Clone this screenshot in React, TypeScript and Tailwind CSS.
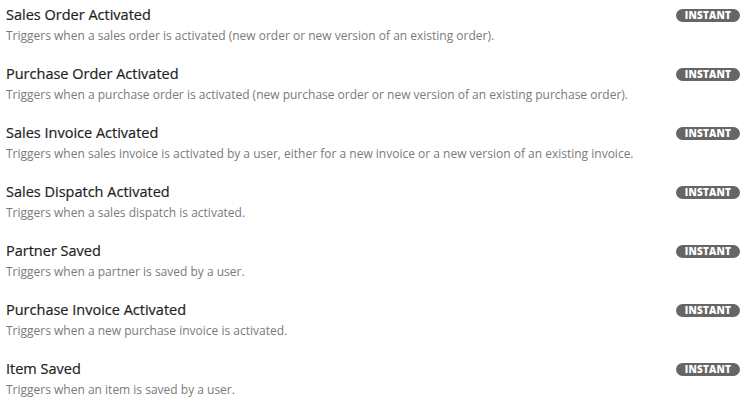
import React from "react";

const items = [
  ["Sales Order Activated", "Triggers when a sales order is activated (new order or new version of an existing order)."],
  ["Purchase Order Activated", "Triggers when a purchase order is activated (new purchase order or new version of an existing purchase order)."],
  ["Sales Invoice Activated", "Triggers when sales invoice is activated by a user, either for a new invoice or a new version of an existing invoice."],
  ["Sales Dispatch Activated", "Triggers when a sales dispatch is activated."],
  ["Partner Saved", "Triggers when a partner is saved by a user."],
  ["Purchase Invoice Activated", "Triggers when a new purchase invoice is activated."],
  ["Item Saved", "Triggers when an item is saved by a user."],
];

export default function App() {
  return (
    <div className="w-[749px] h-[401px] bg-white overflow-hidden" style={{ fontFamily: '"Open Sans", sans-serif' }}>
      <div className="border-b border-[#e5e5e5]">
        {items.map(([t, d], i) => (
          <div key={i} className={"flex justify-between pl-[6px] pr-[9px] pt-[4px] " + (i === items.length - 1 ? "h-[58px]" : "h-[59px]")}>
            <div>
              <div className="text-[14.5px] leading-[21px] text-[#1e1e1e] [-webkit-text-stroke:0.2px_#1e1e1e]">{t}</div>
              <div className="text-[12px] leading-[21px] text-[#7a7a7a]">{d}</div>
            </div>
            <div className="pt-[5px]">
              <span className="flex items-center justify-center w-[64px] h-[13px] rounded-full bg-[#666] text-white text-[10px] font-extrabold tracking-[0.2px]">INSTANT</span>
            </div>
          </div>
        ))}
      </div>
    </div>
  );
}
